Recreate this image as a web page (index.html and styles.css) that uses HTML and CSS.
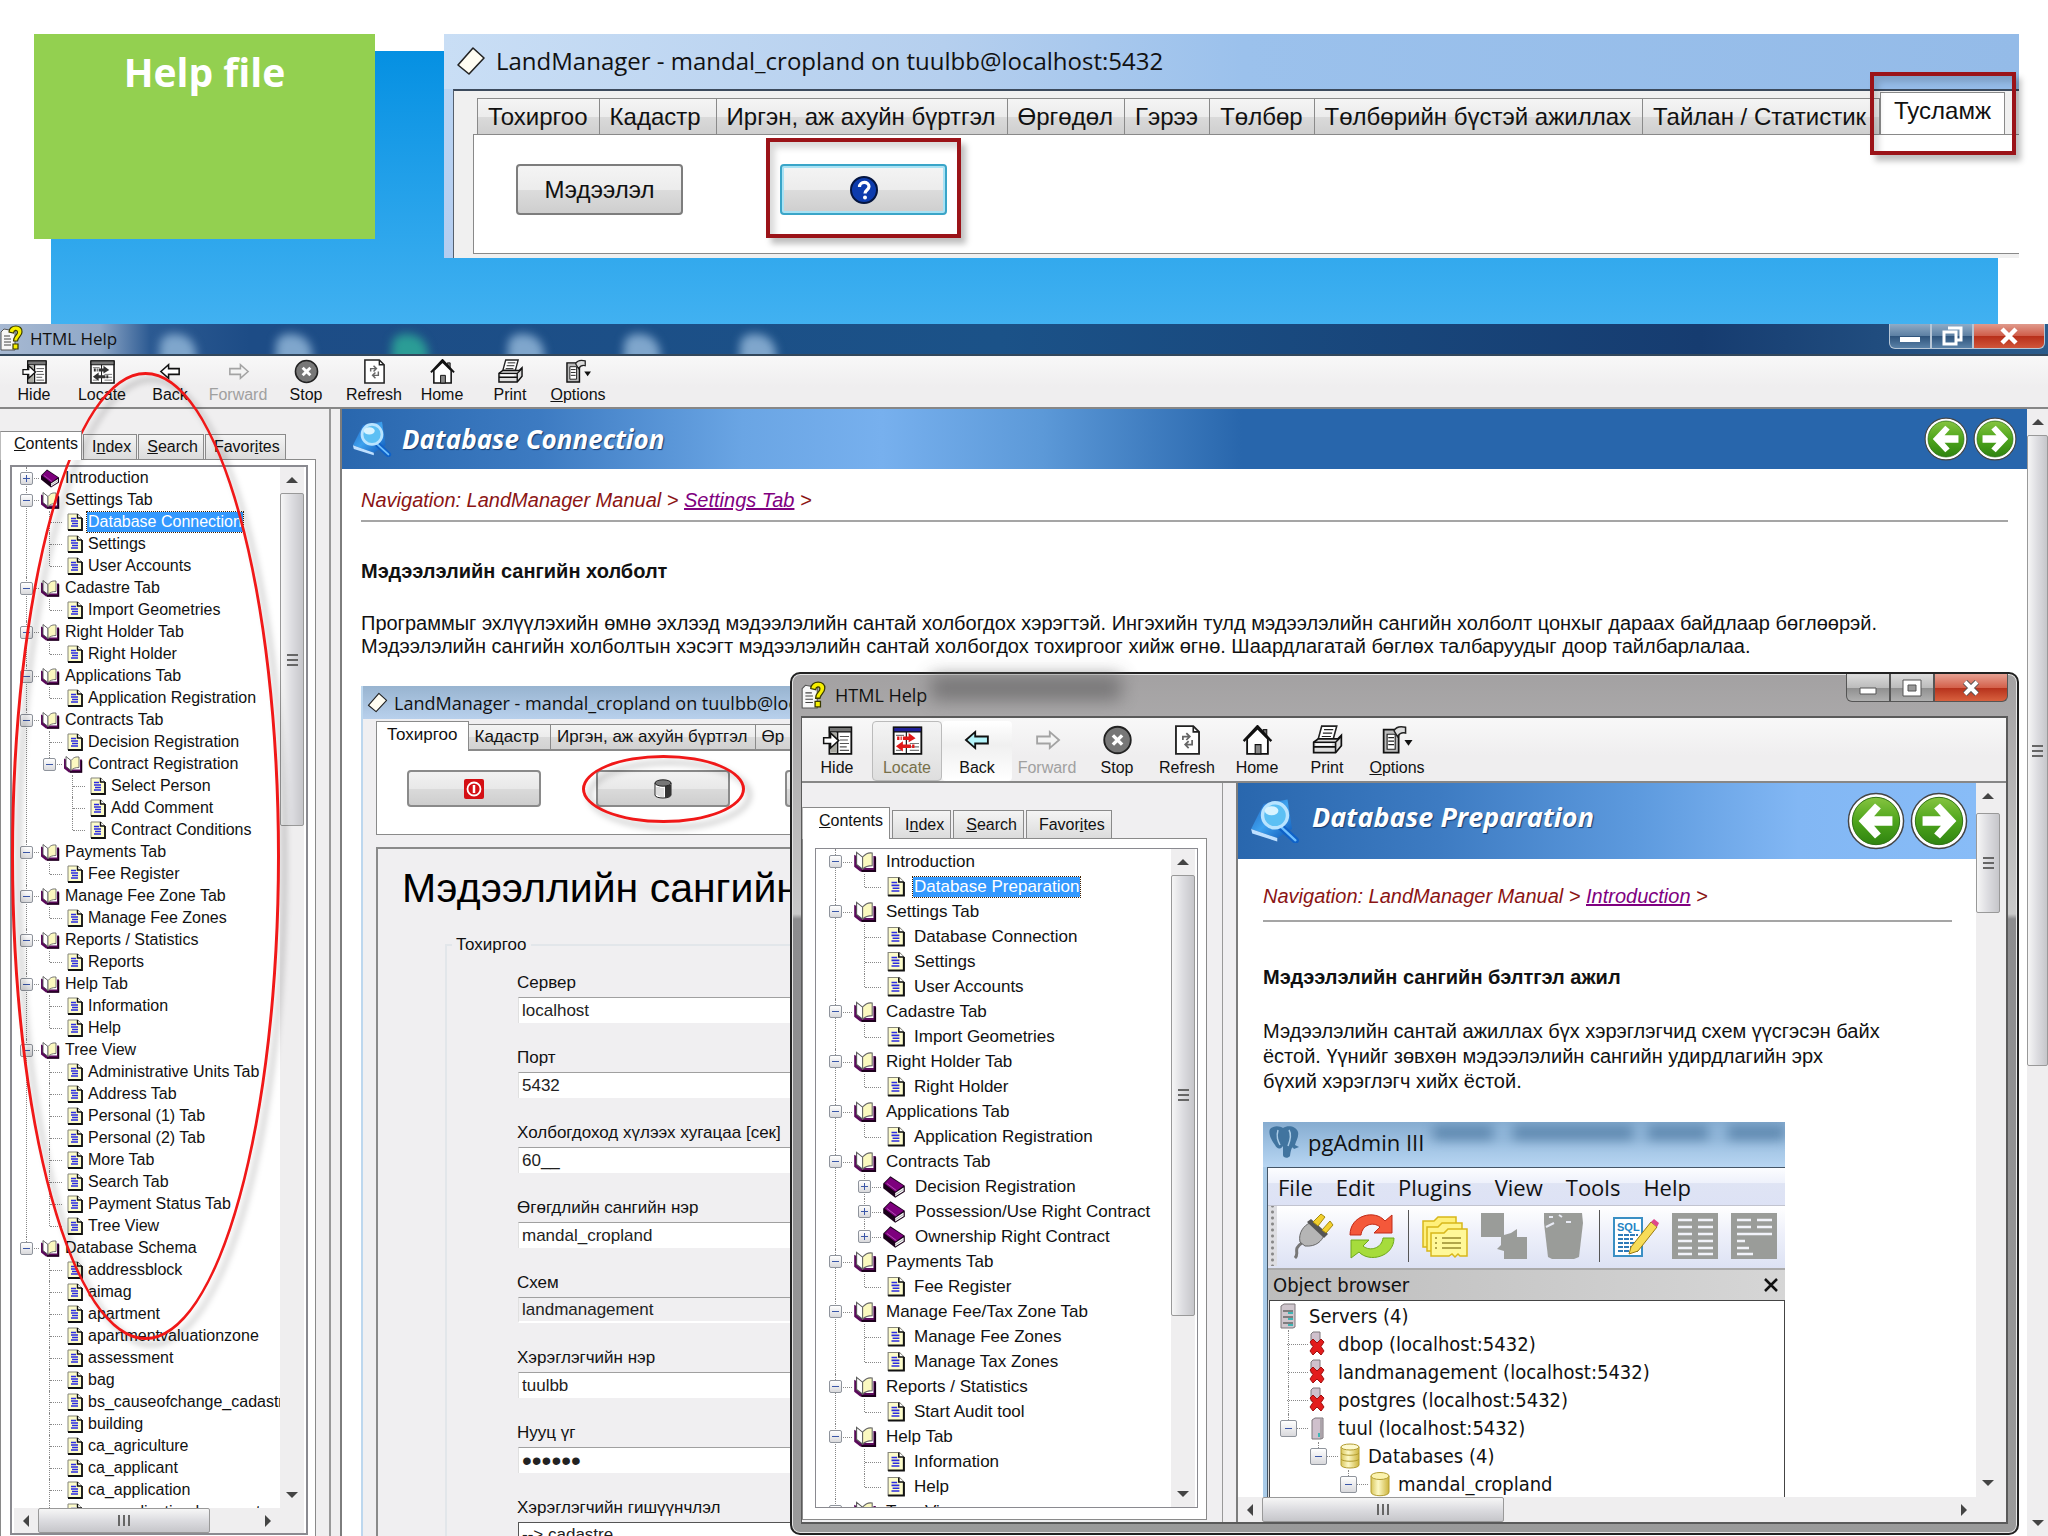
FILE: index.html
```html
<!DOCTYPE html>
<html lang="mn">
<head>
<meta charset="utf-8">
<title>Help file</title>
<link rel="stylesheet" href="styles.css">
</head>
<body>
<svg class="defs" aria-hidden="true">
  <defs>
    <linearGradient id="g-green" x1="0" y1="0" x2="0" y2="1"><stop offset="0" stop-color="#86c440"/><stop offset=".5" stop-color="#4ea51c"/><stop offset="1" stop-color="#2f8410"/></linearGradient>
    <linearGradient id="g-book" x1="0" y1="0" x2="1" y2="1"><stop offset="0" stop-color="#1c5fc0"/><stop offset=".5" stop-color="#3ea2ee"/><stop offset="1" stop-color="#0d56b8"/></linearGradient>
    <linearGradient id="g-cyl" x1="0" y1="0" x2="1" y2="0"><stop offset="0" stop-color="#d9c65a"/><stop offset=".4" stop-color="#fdf9c6"/><stop offset="1" stop-color="#cdb43c"/></linearGradient>
    <symbol id="i-closed" viewBox="0 0 20 18"><path d="M7 0 19 8 19 13 11 18 1 10 1 6Z" fill="#1a001a"/><path d="M7 1 18 8 11 13 2 6Z" fill="#7d007d"/><path d="M11 14 18 9.500 18 12.500 11 17Z" fill="#fff"/><path d="M11 15.500 18 11" stroke="#888" stroke-width=".6"/><path d="M4 6 12 12" stroke="#c060c0" stroke-width=".7"/></symbol>
    <symbol id="i-open" viewBox="0 0 20 18"><path d="M1 3V13L6 17H19V4H17V14H8L3 10V4Z" fill="#5b0a5b"/><path d="M3 1 8 5V15L3 11Z" fill="#fff" stroke="#555" stroke-width=".9"/><path d="M8 5C10 3 11 1 16 1.500V12C12 12 10 13 8 15Z" fill="#fbf9c0" stroke="#666" stroke-width=".9"/><path d="M18.500 5V16.500H7" fill="none" stroke="#1c001c" stroke-width="1.500"/></symbol>
    <symbol id="i-page" viewBox="0 0 16 18"><path d="M1 1H11L15 5V17H1Z" fill="#fdfccb" stroke="#85857a"/><path d="M15 5V17H1" fill="none" stroke="#111" stroke-width="1.800"/><path d="M10.500 1V5H15" fill="#fff" stroke="#111" stroke-width="1.400"/><path d="M4 5.500H9M4 8H11M5 10.500H11M4 13H11" stroke="#2a2ae0" stroke-width="1.400"/></symbol>
    <symbol id="i-hide" viewBox="0 0 26 26"><path d="M6 2H25V25H6Z" fill="#fff" stroke="#111" stroke-width="1.600"/><path d="M6 2H25V6H6Z" fill="#777" stroke="#111"/><path d="M13 6V25" stroke="#111" stroke-width="1.500"/><path d="M7 7H12V24H7Z" fill="#a8a8a0"/><path d="M15 10H23M15 13H22M15 16H23M15 19H21M15 22H23" stroke="#555"/><path d="M1 11H7V7L14 13.500 7 20V16H1Z" fill="#fff" stroke="#111" stroke-width="1.300"/></symbol>
    <symbol id="i-locate" viewBox="0 0 26 26"><path d="M1 2H25V25H1Z" fill="#fff" stroke="#111" stroke-width="1.600"/><path d="M1 2H25V6H1Z" fill="var(--bar,#777)" stroke="#111"/><path d="M12 6V25" stroke="#111"/><path d="M3 9H10M15 16H23M15 19H23M15 22H23M3 22H8" stroke="#777"/><path d="M9 10H14V7L20 11.500 14 15V13H9ZM4 10H6V13H4ZM7 10H8V13H7Z" fill="var(--arr,#333)"/><path d="M16 17H9V14L3 18.500 9 23V20H16ZM17 17H19V20H17Z" fill="var(--arr,#333)"/></symbol>
    <symbol id="i-back" viewBox="0 0 26 26"><path d="M3 13 11 6V10H22V16H11V20Z" fill="var(--fill,#fff)" stroke="#111" stroke-width="1.600"/></symbol>
    <symbol id="i-forward" viewBox="0 0 26 26"><path d="M23 13 15 6V10H4V16H15V20Z" fill="#f4f4f4" stroke="#a3a3a3" stroke-width="1.600"/></symbol>
    <symbol id="i-stop" viewBox="0 0 26 26"><circle cx="13" cy="13" r="11.500" fill="#777" stroke="#222" stroke-width="1.600"/><path d="M9 9 17 17M17 9 9 17" stroke="#fff" stroke-width="3"/></symbol>
    <symbol id="i-refresh" viewBox="0 0 26 26"><path d="M3 1H18L23 6V25H3Z" fill="#fff" stroke="#222" stroke-width="1.600"/><path d="M18 1V6H23" fill="none" stroke="#222" stroke-width="1.400"/><path d="M9 13V10H14M12 7 15 10 12 13M17 13V17H12M14 14 11 17 14 20" fill="none" stroke="#666" stroke-width="1.500"/></symbol>
    <symbol id="i-home" viewBox="0 0 26 26"><path d="M18 4H21V10H18Z" fill="#777" stroke="#222"/><path d="M4 12V25H22V12L13 3Z" fill="#fff" stroke="#111" stroke-width="1.600"/><path d="M1 14 13 1 25 14" fill="none" stroke="#111" stroke-width="2"/><path d="M11 17H16V25H11Z" fill="#888" stroke="#111"/></symbol>
    <symbol id="i-print" viewBox="0 0 26 26"><path d="M8 1H21L18 12H5Z" fill="#fff" stroke="#222" stroke-width="1.400"/><path d="M10 4H18M9 7H17M8 10H16" stroke="#222"/><path d="M1 15 5 12H22L25 9V18L20 24H1Z" fill="#ddd" stroke="#111" stroke-width="1.500"/><path d="M1 15H20L25 10M20 15V24M1 19H20" fill="none" stroke="#111" stroke-width="1.400"/><path d="M3 17H17" stroke="#fff" stroke-width="1.500"/></symbol>
    <symbol id="i-options" viewBox="0 0 26 26"><path d="M1 4H14V24H1Z" fill="#bbb" stroke="#111" stroke-width="1.500"/><path d="M4 8H11V21H4Z" fill="#fff" stroke="#222"/><path d="M5 11H10M5 14H10M5 17H10" stroke="#222"/><path d="M10 5C12 1 16 1 20 2V7C17 6 15 7 13 10Z" fill="#ddd" stroke="#222" stroke-width="1.300"/><path d="M19 13H26L22.500 18Z" fill="#111"/></symbol>
    <symbol id="i-help" viewBox="0 0 24 26"><path d="M1 7 4 4 15 6V25H1Z" fill="#f7f7f7" stroke="#555"/><path d="M4 11H10M4 14H11M4 17H11M4 20H11" stroke="#444"/><path d="M9 7C9-1 23-1 22 7C22 11 18 12 17.500 16H13.500C13 11 18 10 17.500 7C17 4.500 14 5 13.500 8Z" fill="#f7f000" stroke="#3b3b00" stroke-width="1.200"/><path d="M13 19H18V24H13Z" fill="#f7f000" stroke="#3b3b00" stroke-width="1.200"/></symbol>
    <symbol id="i-diamond" viewBox="0 0 30 30"><path d="M2 19 17 2 28 12 13 28Z" fill="#fffdf2" stroke="#222" stroke-width="1.600" stroke-linejoin="round"/></symbol>
    <symbol id="i-lens" viewBox="0 0 44 38"><path d="M12 4 33 0 37 26 24 34 1 26Z" fill="url(#g-book)"/><path d="M1 26 24 34V37L2 30Z" fill="#bfe0ff"/><path d="M27 24 40 36" stroke="#0f62c8" stroke-width="6" stroke-linecap="round"/><path d="M27 24 40 36" stroke="#6fc0ff" stroke-width="2" stroke-linecap="round"/><circle cx="22" cy="14" r="11" fill="#5cc0f4" stroke="#b9e4ff" stroke-width="3"/><ellipse cx="19" cy="10" rx="6" ry="4" fill="#d9f4ff"/></symbol>
    <symbol id="i-prev" viewBox="0 0 60 60"><circle cx="30" cy="30" r="28.500" fill="#fff" stroke="#444" stroke-width="1.500"/><circle cx="30" cy="30" r="24.500" fill="url(#g-green)" stroke="#2c6e12"/><path d="M12 30 29 12 35 17 28 25H47V35H28L35 43 29 48Z" fill="#fff"/></symbol>
    <symbol id="i-next" viewBox="0 0 60 60"><circle cx="30" cy="30" r="28.500" fill="#fff" stroke="#444" stroke-width="1.500"/><circle cx="30" cy="30" r="24.500" fill="url(#g-green)" stroke="#2c6e12"/><path d="M48 30 31 12 25 17 32 25H13V35H32L25 43 31 48Z" fill="#fff"/></symbol>
    <symbol id="i-server" viewBox="0 0 16 26"><path d="M1 3 4 1H15V24L13 25H1Z" fill="#cfc6cd" stroke="#7d767b"/><path d="M3 8H13M3 14H13M3 20H13" stroke="#666" stroke-width="1.400"/><path d="M8 10H13M8 16H13M8 22H13" stroke="#3fb5b5" stroke-width="2"/></symbol>
    <symbol id="i-server1" viewBox="0 0 16 26"><path d="M3 5 6 3H14V23L12 24H3Z" fill="#cfc0cc" stroke="#7d767b"/><path d="M12 4V24" stroke="#888"/><path d="M9 18H11V22H9Z" fill="#3fb5b5"/></symbol>
    <symbol id="i-down" viewBox="0 0 16 26"><path d="M2 3 4 1H11V14H2Z" fill="#cfc0cc" stroke="#7d767b"/><path d="M1 11 4 8 8 12 12 8 15 11 12 15.500 15 20 12 24 8 20 4 24 1 20 4 15.500Z" fill="#e31c1c" stroke="#a01010"/></symbol>
    <symbol id="i-dbs" viewBox="0 0 22 26"><path d="M2 4V22C2 26 20 26 20 22V4Z" fill="url(#g-cyl)" stroke="#b29c30"/><ellipse cx="11" cy="4" rx="9" ry="3" fill="#fdf9cf" stroke="#b29c30"/><path d="M2 10C3 13 19 13 20 10M2 16C3 19 19 19 20 16" fill="none" stroke="#b29c30"/></symbol>
    <symbol id="i-db" viewBox="0 0 22 26"><path d="M2 5V21C2 26 20 26 20 21V5Z" fill="url(#g-cyl)" stroke="#b29c30"/><ellipse cx="11" cy="5" rx="9" ry="3.500" fill="#fbf3ae" stroke="#b29c30"/></symbol>
  </defs>
</svg>

<header class="hero">
  <h1 class="hero-title">Help file</h1>
  <section class="land" aria-label="LandManager">
    <div class="land-bar"><svg class="ic30"><use href="#i-diamond"/></svg><span>LandManager - mandal_cropland on tuulbb@localhost:5432</span></div>
    <div class="land-body">
      <nav class="wtabs">
        <button class="wtab">Тохиргоо</button><button class="wtab wtab-a">Кадастр</button><button class="wtab">Иргэн, аж ахуйн бүртгэл</button><button class="wtab">Өргөдөл</button><button class="wtab">Гэрээ</button><button class="wtab">Төлбөр</button><button class="wtab">Төлбөрийн бүстэй ажиллах</button><button class="wtab wtab-cut">Тайлан / Статистик</button><span class="mark-wrap"><button class="wtab active">Тусламж</button><i class="mark mark-tab"></i></span>
      </nav>
      <div class="land-panel">
        <button class="push">Мэдээлэл</button>
        <span class="mark-wrap"><button class="push focus" aria-label="Тусламж"><svg width="28" height="28" viewBox="0 0 28 28"><circle cx="14" cy="14" r="13" fill="#0d3cae" stroke="#05153f" stroke-width="2"/><path d="M9.500 11C9.500 5 19 5 19 10.500C19 14 15 14 15 17.500" fill="none" stroke="#fff" stroke-width="3.200"/><circle cx="15" cy="21.500" r="2" fill="#fff"/></svg></button><i class="mark mark-btn"></i></span>
      </div>
    </div>
  </section>
</header>

<main class="win">
  <div class="win-bar">
    <svg class="ic24"><use href="#i-help"/></svg><span class="win-name">HTML Help</span>
    <div class="glows"><i class="glow"></i><i class="glow"></i><i class="glow teal"></i><i class="glow"></i><i class="glow"></i><i class="glow"></i></div>
    <div class="wbtns">
      <button class="wb" aria-label="Minimize"><svg width="22" height="16" viewBox="0 0 22 16"><path d="M1 9H21V14H1Z" fill="#fff"/></svg></button>
      <button class="wb" aria-label="Restore"><svg width="22" height="20" viewBox="0 0 22 20"><path d="M7 2H20V14H16M3 6H15V18H3Z" fill="none" stroke="#fff" stroke-width="3"/></svg></button>
      <button class="wb close" aria-label="Close"><svg width="20" height="18" viewBox="0 0 20 18"><path d="M3 2 17 16M17 2 3 16" stroke="#fff" stroke-width="4.500"/></svg></button>
    </div>
  </div>
  <div class="tools">
    <button class="tool"><svg><use href="#i-hide"/></svg>Hide</button>
    <button class="tool"><svg><use href="#i-locate"/></svg>Locate</button>
    <button class="tool"><svg><use href="#i-back"/></svg>Back</button>
    <button class="tool" disabled><svg><use href="#i-forward"/></svg>Forward</button>
    <button class="tool"><svg><use href="#i-stop"/></svg>Stop</button>
    <button class="tool"><svg><use href="#i-refresh"/></svg>Refresh</button>
    <button class="tool"><svg><use href="#i-home"/></svg>Home</button>
    <button class="tool"><svg><use href="#i-print"/></svg>Print</button>
    <button class="tool"><svg><use href="#i-options"/></svg><span><u>O</u>ptions</span></button>
  </div>
  <div class="split">
    <aside class="side">
      <nav class="htabs"><button class="htab active"><u>C</u>ontents</button><button class="htab">I<u>n</u>dex</button><button class="htab"><u>S</u>earch</button><button class="htab">Favor<u>i</u>tes</button></nav>
      <div class="side-panel">
        <div class="treebox">
          <div class="treeview">
            <ul class="tree">
              <li><div class="row"><button class="toggle plus" aria-label="Expand"></button><svg class="book"><use href="#i-closed"/></svg><span>Introduction</span></div></li>
              <li><div class="row"><button class="toggle" aria-label="Collapse"></button><svg class="book"><use href="#i-open"/></svg><span>Settings Tab</span></div>
                <ul>
                  <li><div class="row leaf"><svg class="page"><use href="#i-page"/></svg><span class="sel">Database Connection</span></div></li>
                  <li><div class="row leaf"><svg class="page"><use href="#i-page"/></svg><span>Settings</span></div></li>
                  <li><div class="row leaf"><svg class="page"><use href="#i-page"/></svg><span>User Accounts</span></div></li>
                </ul></li>
              <li><div class="row"><button class="toggle" aria-label="Collapse"></button><svg class="book"><use href="#i-open"/></svg><span>Cadastre Tab</span></div>
                <ul><li><div class="row leaf"><svg class="page"><use href="#i-page"/></svg><span>Import Geometries</span></div></li></ul></li>
              <li><div class="row"><button class="toggle" aria-label="Collapse"></button><svg class="book"><use href="#i-open"/></svg><span>Right Holder Tab</span></div>
                <ul><li><div class="row leaf"><svg class="page"><use href="#i-page"/></svg><span>Right Holder</span></div></li></ul></li>
              <li><div class="row"><button class="toggle" aria-label="Collapse"></button><svg class="book"><use href="#i-open"/></svg><span>Applications Tab</span></div>
                <ul><li><div class="row leaf"><svg class="page"><use href="#i-page"/></svg><span>Application Registration</span></div></li></ul></li>
              <li><div class="row"><button class="toggle" aria-label="Collapse"></button><svg class="book"><use href="#i-open"/></svg><span>Contracts Tab</span></div>
                <ul>
                  <li><div class="row leaf"><svg class="page"><use href="#i-page"/></svg><span>Decision Registration</span></div></li>
                  <li><div class="row"><button class="toggle" aria-label="Collapse"></button><svg class="book"><use href="#i-open"/></svg><span>Contract Registration</span></div>
                    <ul>
                      <li><div class="row leaf"><svg class="page"><use href="#i-page"/></svg><span>Select Person</span></div></li>
                      <li><div class="row leaf"><svg class="page"><use href="#i-page"/></svg><span>Add Comment</span></div></li>
                      <li><div class="row leaf"><svg class="page"><use href="#i-page"/></svg><span>Contract Conditions</span></div></li>
                    </ul></li>
                </ul></li>
              <li><div class="row"><button class="toggle" aria-label="Collapse"></button><svg class="book"><use href="#i-open"/></svg><span>Payments Tab</span></div>
                <ul><li><div class="row leaf"><svg class="page"><use href="#i-page"/></svg><span>Fee Register</span></div></li></ul></li>
              <li><div class="row"><button class="toggle" aria-label="Collapse"></button><svg class="book"><use href="#i-open"/></svg><span>Manage Fee Zone Tab</span></div>
                <ul><li><div class="row leaf"><svg class="page"><use href="#i-page"/></svg><span>Manage Fee Zones</span></div></li></ul></li>
              <li><div class="row"><button class="toggle" aria-label="Collapse"></button><svg class="book"><use href="#i-open"/></svg><span>Reports / Statistics</span></div>
                <ul><li><div class="row leaf"><svg class="page"><use href="#i-page"/></svg><span>Reports</span></div></li></ul></li>
              <li><div class="row"><button class="toggle" aria-label="Collapse"></button><svg class="book"><use href="#i-open"/></svg><span>Help Tab</span></div>
                <ul>
                  <li><div class="row leaf"><svg class="page"><use href="#i-page"/></svg><span>Information</span></div></li>
                  <li><div class="row leaf"><svg class="page"><use href="#i-page"/></svg><span>Help</span></div></li>
                </ul></li>
              <li><div class="row"><button class="toggle" aria-label="Collapse"></button><svg class="book"><use href="#i-open"/></svg><span>Tree View</span></div>
                <ul>
                  <li><div class="row leaf"><svg class="page"><use href="#i-page"/></svg><span>Administrative Units Tab</span></div></li>
                  <li><div class="row leaf"><svg class="page"><use href="#i-page"/></svg><span>Address Tab</span></div></li>
                  <li><div class="row leaf"><svg class="page"><use href="#i-page"/></svg><span>Personal (1) Tab</span></div></li>
                  <li><div class="row leaf"><svg class="page"><use href="#i-page"/></svg><span>Personal (2) Tab</span></div></li>
                  <li><div class="row leaf"><svg class="page"><use href="#i-page"/></svg><span>More Tab</span></div></li>
                  <li><div class="row leaf"><svg class="page"><use href="#i-page"/></svg><span>Search Tab</span></div></li>
                  <li><div class="row leaf"><svg class="page"><use href="#i-page"/></svg><span>Payment Status Tab</span></div></li>
                  <li><div class="row leaf"><svg class="page"><use href="#i-page"/></svg><span>Tree View</span></div></li>
                </ul></li>
              <li><div class="row"><button class="toggle" aria-label="Collapse"></button><svg class="book"><use href="#i-open"/></svg><span>Database Schema</span></div>
                <ul>
                  <li><div class="row leaf"><svg class="page"><use href="#i-page"/></svg><span>addressblock</span></div></li>
                  <li><div class="row leaf"><svg class="page"><use href="#i-page"/></svg><span>aimag</span></div></li>
                  <li><div class="row leaf"><svg class="page"><use href="#i-page"/></svg><span>apartment</span></div></li>
                  <li><div class="row leaf"><svg class="page"><use href="#i-page"/></svg><span>apartmentvaluationzone</span></div></li>
                  <li><div class="row leaf"><svg class="page"><use href="#i-page"/></svg><span>assessment</span></div></li>
                  <li><div class="row leaf"><svg class="page"><use href="#i-page"/></svg><span>bag</span></div></li>
                  <li><div class="row leaf"><svg class="page"><use href="#i-page"/></svg><span>bs_causeofchange_cadastr</span></div></li>
                  <li><div class="row leaf"><svg class="page"><use href="#i-page"/></svg><span>building</span></div></li>
                  <li><div class="row leaf"><svg class="page"><use href="#i-page"/></svg><span>ca_agriculture</span></div></li>
                  <li><div class="row leaf"><svg class="page"><use href="#i-page"/></svg><span>ca_applicant</span></div></li>
                  <li><div class="row leaf"><svg class="page"><use href="#i-page"/></svg><span>ca_application</span></div></li>
                  <li><div class="row leaf"><svg class="page"><use href="#i-page"/></svg><span>ca_applicationdocument</span></div></li>
                </ul></li>
            </ul>
            <div class="vs"><i class="ar up"></i><i class="thumb t-side"></i><i class="ar dn"></i></div>
          </div>
          <div class="hs hs-side"><i class="ar lf"></i><i class="thumb t-h"></i><i class="ar rt"></i></div>
        </div>
      </div>
    </aside>
    <div class="content">
      <article class="doc">
        <header class="doc-head"><svg class="lens"><use href="#i-lens"/></svg><h2>Database Connection</h2><div class="pn"><button aria-label="Previous"><svg><use href="#i-prev"/></svg></button><button aria-label="Next"><svg><use href="#i-next"/></svg></button></div></header>
        <div class="doc-body">
          <p class="crumb">Navigation: LandManager Manual &gt; <a href="#settings">Settings Tab</a> &gt;</p>
          <h3>Мэдээлэлийн сангийн холболт</h3>
          <p class="para">Программыг эхлүүлэхийн өмнө эхлээд мэдээлэлийн сантай холбогдох хэрэгтэй. Ингэхийн тулд мэдээлэлийн сангийн холболт цонхыг дараах байдлаар бөглөөрэй.<br>Мэдээлэлийн сангийн холболтын хэсэгт мэдээлэлийн сантай холбогдох тохиргоог хийж өгнө. Шаардлагатай бөглөх талбаруудыг доор тайлбарлалаа.</p>
          <section class="shot">
            <div class="shot-bar"><svg><use href="#i-diamond"/></svg><span>LandManager - mandal_cropland on tuulbb@loca</span></div>
            <div class="shot-body">
              <nav class="stabs"><button class="stab active">Тохиргоо</button><button class="stab">Кадастр</button><button class="stab">Иргэн, аж ахуйн бүртгэл</button><button class="stab">Өр</button></nav>
              <div class="shot-panel">
                <button class="spush" aria-label="Гарах"><svg width="20" height="20" viewBox="0 0 20 20"><rect width="20" height="20" rx="2" fill="#d40f14"/><circle cx="10" cy="10" r="6.500" fill="none" stroke="#fff" stroke-width="1.800"/><path d="M10 6V14" stroke="#fff" stroke-width="2.500"/></svg></button>
                <span class="mark-wrap"><button class="spush" aria-label="Мэдээллийн сан"><svg width="18" height="20" viewBox="0 0 18 20"><path d="M1 4V16C1 20 17 20 17 16V4Z" fill="#fff" stroke="#222"/><path d="M11 6H17V16C16 18 13 19 11 19Z" fill="#333"/><path d="M3 8V16M5 8V17M7 9V18M9 9V18" stroke="#bbb"/><ellipse cx="9" cy="4" rx="8" ry="3.200" fill="#777" stroke="#222"/></svg></button><i class="ring ring-btn"></i></span>
                <button class="spush" aria-label="Тохируулах"></button>
              </div>
              <form class="shot-form">
                <h4>Мэдээллийн сангийн</h4>
                <fieldset>
                  <legend>Тохиргоо</legend>
                  <div class="field"><label for="f1">Сервер</label><input id="f1" value="localhost"></div>
                  <div class="field"><label for="f2">Порт</label><input id="f2" value="5432"></div>
                  <div class="field"><label for="f3">Холбогдоход хүлээх хугацаа [сек]</label><input id="f3" value="60__"></div>
                  <div class="field"><label for="f4">Өгөгдлийн сангийн нэр</label><input id="f4" value="mandal_cropland"></div>
                  <div class="field"><label for="f5">Схем</label><input id="f5" value="landmanagement" readonly></div>
                  <div class="field"><label for="f6">Хэрэглэгчийн нэр</label><input id="f6" value="tuulbb"></div>
                  <div class="field"><label for="f7">Нууц үг</label><input id="f7" type="password" value="tuul12"></div>
                  <div class="field"><label for="f8">Хэрэглэгчийн гишүүнчлэл</label><input id="f8" class="boxed" value="--&gt; cadastre"></div>
                </fieldset>
              </form>
            </div>
          </section>
        </div>
      </article>
      <div class="vs vs-main"><i class="ar up"></i><i class="thumb t-main"></i><i class="ar dn"></i></div>
    </div>
  </div>
</main>
<i class="ring ring-tree"></i>

<section class="dlg" aria-label="HTML Help">
  <div class="dlg-bar">
    <svg class="ic26"><use href="#i-help"/></svg><span>HTML Help</span><i class="smudge"></i>
    <div class="wbtns grey">
      <button class="wb" aria-label="Minimize"><svg width="20" height="16" viewBox="0 0 20 16"><path d="M2 8H18V14H2Z" fill="#fff" stroke="#555"/></svg></button>
      <button class="wb" aria-label="Maximize"><svg width="20" height="18" viewBox="0 0 20 18"><path d="M1 1H19V17H1Z" fill="#fff" stroke="#555"/><path d="M6 6H14V12H6Z" fill="#999" stroke="#555"/></svg></button>
      <button class="wb close" aria-label="Close"><svg width="18" height="16" viewBox="0 0 18 16"><path d="M3 2 15 14M15 2 3 14" stroke="#555" stroke-width="6"/><path d="M3 2 15 14M15 2 3 14" stroke="#fff" stroke-width="4"/></svg></button>
    </div>
  </div>
  <div class="dlg-in">
    <div class="tools">
      <button class="tool"><svg><use href="#i-hide"/></svg>Hide</button>
      <button class="tool pressed"><svg class="red"><use href="#i-locate"/></svg><span class="faded">Locate</span></button>
      <button class="tool hot"><svg class="cyan"><use href="#i-back"/></svg>Back</button>
      <button class="tool" disabled><svg><use href="#i-forward"/></svg>Forward</button>
      <button class="tool"><svg><use href="#i-stop"/></svg>Stop</button>
      <button class="tool"><svg><use href="#i-refresh"/></svg>Refresh</button>
      <button class="tool"><svg><use href="#i-home"/></svg>Home</button>
      <button class="tool"><svg><use href="#i-print"/></svg>Print</button>
      <button class="tool"><svg><use href="#i-options"/></svg><span><u>O</u>ptions</span></button>
    </div>
    <div class="split">
      <aside class="side">
        <nav class="htabs"><button class="htab active"><u>C</u>ontents</button><button class="htab">I<u>n</u>dex</button><button class="htab"><u>S</u>earch</button><button class="htab">Favor<u>i</u>tes</button></nav>
        <div class="side-panel">
          <div class="treebox">
            <div class="treeview">
              <ul class="tree">
                <li><div class="row"><button class="toggle" aria-label="Collapse"></button><svg class="book"><use href="#i-open"/></svg><span>Introduction</span></div>
                  <ul><li><div class="row leaf"><svg class="page"><use href="#i-page"/></svg><span class="sel">Database Preparation</span></div></li></ul></li>
                <li><div class="row"><button class="toggle" aria-label="Collapse"></button><svg class="book"><use href="#i-open"/></svg><span>Settings Tab</span></div>
                  <ul>
                    <li><div class="row leaf"><svg class="page"><use href="#i-page"/></svg><span>Database Connection</span></div></li>
                    <li><div class="row leaf"><svg class="page"><use href="#i-page"/></svg><span>Settings</span></div></li>
                    <li><div class="row leaf"><svg class="page"><use href="#i-page"/></svg><span>User Accounts</span></div></li>
                  </ul></li>
                <li><div class="row"><button class="toggle" aria-label="Collapse"></button><svg class="book"><use href="#i-open"/></svg><span>Cadastre Tab</span></div>
                  <ul><li><div class="row leaf"><svg class="page"><use href="#i-page"/></svg><span>Import Geometries</span></div></li></ul></li>
                <li><div class="row"><button class="toggle" aria-label="Collapse"></button><svg class="book"><use href="#i-open"/></svg><span>Right Holder Tab</span></div>
                  <ul><li><div class="row leaf"><svg class="page"><use href="#i-page"/></svg><span>Right Holder</span></div></li></ul></li>
                <li><div class="row"><button class="toggle" aria-label="Collapse"></button><svg class="book"><use href="#i-open"/></svg><span>Applications Tab</span></div>
                  <ul><li><div class="row leaf"><svg class="page"><use href="#i-page"/></svg><span>Application Registration</span></div></li></ul></li>
                <li><div class="row"><button class="toggle" aria-label="Collapse"></button><svg class="book"><use href="#i-open"/></svg><span>Contracts Tab</span></div>
                  <ul>
                    <li><div class="row"><button class="toggle plus" aria-label="Expand"></button><svg class="book"><use href="#i-closed"/></svg><span>Decision Registration</span></div></li>
                    <li><div class="row"><button class="toggle plus" aria-label="Expand"></button><svg class="book"><use href="#i-closed"/></svg><span>Possession/Use Right Contract</span></div></li>
                    <li><div class="row"><button class="toggle plus" aria-label="Expand"></button><svg class="book"><use href="#i-closed"/></svg><span>Ownership Right Contract</span></div></li>
                  </ul></li>
                <li><div class="row"><button class="toggle" aria-label="Collapse"></button><svg class="book"><use href="#i-open"/></svg><span>Payments Tab</span></div>
                  <ul><li><div class="row leaf"><svg class="page"><use href="#i-page"/></svg><span>Fee Register</span></div></li></ul></li>
                <li><div class="row"><button class="toggle" aria-label="Collapse"></button><svg class="book"><use href="#i-open"/></svg><span>Manage Fee/Tax Zone Tab</span></div>
                  <ul>
                    <li><div class="row leaf"><svg class="page"><use href="#i-page"/></svg><span>Manage Fee Zones</span></div></li>
                    <li><div class="row leaf"><svg class="page"><use href="#i-page"/></svg><span>Manage Tax Zones</span></div></li>
                  </ul></li>
                <li><div class="row"><button class="toggle" aria-label="Collapse"></button><svg class="book"><use href="#i-open"/></svg><span>Reports / Statistics</span></div>
                  <ul><li><div class="row leaf"><svg class="page"><use href="#i-page"/></svg><span>Start Audit tool</span></div></li></ul></li>
                <li><div class="row"><button class="toggle" aria-label="Collapse"></button><svg class="book"><use href="#i-open"/></svg><span>Help Tab</span></div>
                  <ul>
                    <li><div class="row leaf"><svg class="page"><use href="#i-page"/></svg><span>Information</span></div></li>
                    <li><div class="row leaf"><svg class="page"><use href="#i-page"/></svg><span>Help</span></div></li>
                  </ul></li>
                <li><div class="row"><button class="toggle" aria-label="Collapse"></button><svg class="book"><use href="#i-open"/></svg><span>Tree View</span></div></li>
              </ul>
              <div class="vs"><i class="ar up"></i><i class="thumb t-dside"></i><i class="ar dn"></i></div>
            </div>
          </div>
        </div>
      </aside>
      <div class="content">
        <div class="dcol">
          <article class="doc">
            <header class="doc-head"><svg class="lens"><use href="#i-lens"/></svg><h2>Database Preparation</h2><div class="pn"><button aria-label="Previous"><svg><use href="#i-prev"/></svg></button><button aria-label="Next"><svg><use href="#i-next"/></svg></button></div></header>
            <div class="doc-body">
              <p class="crumb">Navigation: LandManager Manual &gt; <a href="#intro">Introduction</a> &gt;</p>
              <h3>Мэдээлэлийн сангийн бэлтгэл ажил</h3>
              <p class="para">Мэдээлэлийн сантай ажиллах бүх хэрэглэгчид схем үүсгэсэн байх<br>ёстой. Үүнийг зөвхөн мэдээлэлийн сангийн удирдлагийн эрх<br>бүхий хэрэглэгч хийх ёстой.</p>
              <section class="pg">
                <div class="pg-bar"><svg width="32" height="34" viewBox="0 0 32 34"><path d="M2 4C6 0 12 1 15 3C20 0 28 1 30 7C31 12 28 16 27 20L31 22L26 24C24 20 23 24 22 31C20 34 15 33 15 30V21C12 25 9 24 7 20C3 15 0 8 2 4Z" fill="#41749f"/><path d="M10 5C8 12 10 16 12 20M21 5C24 10 22 16 20 21" fill="none" stroke="#a9cbe6" stroke-width="1.500"/></svg><span>pgAdmin III</span><i class="pg-blur"></i></div>
                <div class="pg-in">
                  <nav class="pg-menu"><a href="#file">File</a><a href="#edit">Edit</a><a href="#plugins">Plugins</a><a href="#view">View</a><a href="#tools">Tools</a><a href="#help">Help</a></nav>
                  <div class="pg-tools">
                    <i class="grip"></i>
                    <svg class="pt" viewBox="0 0 46 46"><path d="M5 45C10 40 2 36 12 30" fill="none" stroke="#777" stroke-width="3"/><path d="M10 29C8 20 14 12 20 10L34 22C32 28 26 34 15 33Z" fill="#b5b5b5" stroke="#666"/><path d="M17 9 21 6 38 21 34 25Z" fill="#555"/><path d="M23 9 31 1 35 4 28 13ZM32 17 40 8 43 12 36 20Z" fill="#f2cf2e" stroke="#a38a10"/></svg>
                    <svg class="pt" viewBox="0 0 46 46"><path d="M1 22C1 2 26-4 36 8L43 2V20H25L31 14C24 8 13 12 12 22Z" fill="#f4583a" stroke="#c02a18"/><path d="M45 25C45 44 20 50 10 39L2 45V27H20L14 33C21 39 33 35 34 25Z" fill="#a6dc3c" stroke="#6ea81c"/></svg>
                    <i class="sep"></i>
                    <svg class="pt" viewBox="0 0 46 46"><path d="M1 8H12L16 4H34V34H1Z" fill="#fff07a" stroke="#d8b71a" stroke-width="1.500"/><path d="M5 14H16L20 10H40V38H5Z" fill="#fff48a" stroke="#d8b71a" stroke-width="1.500"/><path d="M9 20H22L26 16H45V43H38L36 41L33 44L30 41L27 43H9Z" fill="#fff899" stroke="#d8b71a" stroke-width="1.500"/><path d="M20 25H39M20 30H39M20 35H39M13 25H15M13 30H15M13 35H15" stroke="#998a30" stroke-width="1.500"/></svg>
                    <svg class="pt" viewBox="0 0 46 46"><path d="M0 0H23V22L30 20 36 16V24H46V46H23V38L16 36 20 32V24H0Z" fill="#9a9c99"/></svg>
                    <svg class="pt" viewBox="0 0 46 46"><path d="M4 0H42L43 10 39 44 34 46H12L8 44 4 10Z" fill="#9a9c99"/><path d="M6 14 14 10M9 4H13M19 2 22 4M26 9H31" stroke="#e8eaf4" stroke-width="2"/></svg>
                    <i class="sep"></i>
                    <svg class="pt" viewBox="0 0 46 46"><path d="M1 5H29V43H1Z" fill="#fff" stroke="#3a8fc4" stroke-width="2"/><text x="4" y="18" class="sqlt">SQL</text><path d="M5 22H25M5 26H20M5 30H24M5 34H18M5 38H25" stroke="#2e7ab8" stroke-width="2" stroke-dasharray="5 1"/><path d="M18 34 38 9 44 14 25 38 16 41Z" fill="#f7dc58" stroke="#9a7a10"/><path d="M38 9 41 6 46 10 44 14Z" fill="#e0478a"/></svg>
                    <svg class="pt" viewBox="0 0 46 46"><path d="M0 0H46V46H0Z" fill="#9a9c99"/><path d="M6 7H20M26 7H41M6 14H20M26 14H41M6 21H20M26 21H41M6 28H20M26 28H41M6 35H20M26 35H41M6 41H20M26 41H41" stroke="#f2f3fa" stroke-width="2.500"/></svg>
                    <svg class="pt" viewBox="0 0 46 46"><path d="M0 0H46V46H0Z" fill="#9a9c99"/><path d="M6 7H20M26 7H41M6 14H20M26 14H41M6 21H41M6 28H14M6 35H18M6 41H22" stroke="#f2f3fa" stroke-width="2.500"/></svg>
                  </div>
                  <div class="pg-title"><span>Object browser</span><button aria-label="Close"><svg width="16" height="16" viewBox="0 0 16 16"><path d="M2 2 14 14M14 2 2 14" stroke="#111" stroke-width="2.500"/></svg></button></div>
                  <div class="pg-tree">
                    <div class="row"><svg class="srv"><use href="#i-server"/></svg><span>Servers (4)</span></div>
                    <ul class="tree">
                      <li><div class="row leaf"><svg class="srv"><use href="#i-down"/></svg><span>dbop (localhost:5432)</span></div></li>
                      <li><div class="row leaf"><svg class="srv"><use href="#i-down"/></svg><span>landmanagement (localhost:5432)</span></div></li>
                      <li><div class="row leaf"><svg class="srv"><use href="#i-down"/></svg><span>postgres (localhost:5432)</span></div></li>
                      <li><div class="row"><button class="toggle" aria-label="Collapse"></button><svg class="srv"><use href="#i-server1"/></svg><span>tuul (localhost:5432)</span></div>
                        <ul><li><div class="row"><button class="toggle" aria-label="Collapse"></button><svg class="dbi"><use href="#i-dbs"/></svg><span>Databases (4)</span></div>
                          <ul><li><div class="row"><button class="toggle" aria-label="Collapse"></button><svg class="dbi"><use href="#i-db"/></svg><span>mandal_cropland</span></div></li></ul></li></ul></li>
                    </ul>
                  </div>
                </div>
              </section>
            </div>
          </article>
          <div class="hs"><i class="ar lf"></i><i class="thumb t-dh"></i><i class="ar rt"></i></div>
        </div>
        <div class="vs"><i class="ar up"></i><i class="thumb t-doc"></i><i class="ar dn"></i></div>
      </div>
    </div>
  </div>
</section>
</body>
</html>
```
FILE: styles.css
```css
* { box-sizing: border-box; }
html, body { margin: 0; }
body {
  position: relative; height: 100vh; overflow: hidden;
  display: flex; flex-direction: column;
  background: #fff; color: #111;
  font-family: "Liberation Sans", Arial, sans-serif; font-size: 16px;
}
button { font: inherit; color: inherit; margin: 0; padding: 0; border: 0; background: none; }
h1, h2, h3, h4, p, ul, fieldset { margin: 0; padding: 0; }
ul { list-style: none; }
i { font-style: normal; }
svg { display: block; flex: none; }
.defs { position: absolute; width: 0; height: 0; }

/* slide header */
.hero { position: relative; display: flex; gap: 69px; padding: 34px 29px 66px 34px; flex: none; }
.hero::before { content: ""; position: absolute; inset: 51px 50px 0 51px; background: linear-gradient(#0590e2, #41b1f1); }
.hero-title {
  position: relative; width: 341px; height: 205px; padding-top: 11px; text-align: center;
  background: #93d050; color: #fff; font: bold 39px/54px "Open Sans", sans-serif;
}
.land { position: relative; flex: 1; min-width: 0; height: 224px; display: flex; flex-direction: column; background: linear-gradient(#bcd6f3, #b4cdf0); }
.land-bar {
  display: flex; align-items: center; gap: 10px; height: 55px; padding: 0 0 2px 12px;
  background: linear-gradient(90deg, #c9def5 0, #b5cfee 500px, #9bc1ec 800px, #94bbe8);
  font: 24px "Open Sans", sans-serif;
}
.ic30 { width: 30px; height: 30px; }
.ic24 { width: 24px; height: 26px; }
.ic26 { width: 26px; height: 28px; }
.land-body { flex: 1; margin-left: 9px; padding: 5px 0 0 19px; background: #f0f0f0; border-top: 2px solid #3c4a5c; border-left: 1px solid #55606e; display: flex; flex-direction: column; }
.wtabs { display: flex; align-items: flex-end; padding-left: 4px; padding-right: 14px; height: 38px; font-size: 24px; }
.wtab { flex: none; height: 36px; padding: 0 11px 0 10px; white-space: nowrap; background: linear-gradient(#f4f4f4, #ececec 50%, #dadada 52%, #cfcfcf); border: 1px solid #8a8a8a; border-bottom: 0; }
.wtab + .wtab { border-left: 0; }
.wtab-a { padding-right: 15px; }
.wtab-cut { flex: 1; min-width: 0; overflow: hidden; text-align: left; padding-right: 0; }
.wtab.active { height: 42px; padding: 0 13px 6px; background: #fff; }
.mark-wrap { position: relative; display: block; flex: none; }
.wtabs .mark-wrap { z-index: 1; }
.mark { position: absolute; border: 4px solid #9b1318; box-shadow: 5px 6px 6px rgba(0,0,0,.25), inset 5px 6px 6px rgba(0,0,0,.15); pointer-events: none; }
.mark-tab { inset: -20px -11px -21px -10px; }
.mark-btn { inset: -26px -14px -23px -14px; }
.land-panel { flex: 1; display: flex; align-items: flex-start; gap: 97px; padding: 29px 0 0 42px; margin-bottom: 4px; background: #fff; border: 1px solid #898989; border-right: 0; }
.push { display: flex; align-items: center; justify-content: center; width: 167px; height: 51px; font-size: 24px; border: 2px solid #7d7d7d; border-radius: 4px; background: linear-gradient(#f4f4f4, #ececec 50%, #dcdcdc 52%, #cecece); }
.push.focus { border-color: #3aa5c8; box-shadow: inset 0 0 0 2px #a9e2f4; }

/* help window */
.win { flex: 1; min-height: 0; display: flex; flex-direction: column; background: #f0eff0; }
.win-bar {
  position: relative; display: flex; align-items: center; gap: 6px; height: 32px; flex: none; overflow: hidden; padding-bottom: 2px;
  background: linear-gradient(90deg, #a7b9d2 0, #8fa8c8 100px, #2c5a92 150px, #1d4c86 250px, #1b5288 1000px, #163c70 1700px, #2a5c8c);
  border-bottom: 2px solid #33485c; font: 17px "Open Sans", sans-serif;
}
.win-name { position: relative; }
.glows { position: absolute; inset: 10px auto 0 160px; display: flex; gap: 80px; filter: blur(5px); }
.glow { width: 36px; height: 30px; border-radius: 12px 20px 0 0; background: #7fa6cc; }
.glow.teal { background: #2b9d96; }
.wbtns { display: flex; margin-left: auto; align-self: flex-start; margin-right: 3px; position: relative; }
.wb { display: flex; align-items: center; justify-content: center; width: 42px; height: 25px; background: linear-gradient(#8fabc6, #5c7fa2 50%, #2f547c 52%, #5a82a8); border: 1px solid #b6c6d6; border-top: 0; }
.wb:first-child { border-radius: 0 0 0 6px; }
.wb.close { width: 72px; border-radius: 0 0 6px 0; background: linear-gradient(#e09a8c, #cf5c48 50%, #b8301a 52%, #d0553a); }
.tools { display: flex; flex: none; height: 53px; padding-top: 2px; border-bottom: 2px solid #878787; background: linear-gradient(#f8f8f8, #efeeef 60%); }
.tool { display: flex; flex-direction: column; align-items: center; gap: 1px; width: 68px; padding-top: 1px; line-height: 20px; white-space: nowrap; }
.tool svg { width: 25px; height: 25px; }
.tool:disabled { color: #a0a0a0; }
.split { flex: 1; min-height: 0; display: flex; }
.side { flex: none; width: 342px; padding-top: 22px; display: flex; flex-direction: column; min-height: 0; border-right: 2px solid #7d7d7d; background: linear-gradient(90deg, transparent 329px, #999 329px, #999 331px, transparent 331px); }
.htabs { display: flex; align-items: flex-end; height: 28px; flex: none; }
.htab { height: 25px; padding: 0 5px 0 8px; margin-left: 1px; white-space: nowrap; border: 1px solid #8a8a8a; border-bottom: 0; background: linear-gradient(#f4f4f4, #dcdcdc); }
.htab.active { height: 29px; padding: 0 3px 5px 13px; margin: 0 0 -1px; background: #fff; z-index: 1; border-left-color: #bbb; }
.side-panel { flex: 1; min-height: 0; margin-right: 24px; padding: 5px 7px 1px 9px; background: #fff; border: 1px solid #8a8a8a; border-bottom: 0; display: flex; flex-direction: column; }
.treebox { flex: 1; min-height: 0; display: flex; flex-direction: column; border: 2px solid #8a8a90; padding: 0 2px; background: #fff; }
.treeview { flex: 1; min-height: 0; display: flex; overflow: hidden; }

/* tree */
.win { --row: 22px; --box: 13px; --dash: 7px; --book: 20px; --page: 16px; --ind: 23px; }
.dlg { --row: 25px; --box: 13px; --dash: 11px; --book: 24px; --page: 18px; --ind: 29px; }
.pg { --row: 28px; --box: 17px; --dash: 12px; --ind: 30px; }
.tree { flex: 1; min-width: 0; overflow: hidden; }
.tree ul { margin-left: var(--ind); }
.tree li { position: relative; }
.tree li::before { content: ""; position: absolute; left: 6px; top: 0; bottom: 0; border-left: 1px dotted #888; }
.tree li:last-child::before { bottom: auto; height: calc(var(--row) / 2); }
.row { position: relative; display: flex; align-items: center; height: var(--row); white-space: nowrap; }
.tree .row::before { content: ""; position: absolute; left: 7px; top: 50%; width: calc(var(--box) + var(--dash) - 8px); border-top: 1px dotted #888; }
.row.leaf { padding-left: calc(var(--box) + var(--dash) + 4px); }
.toggle {
  position: relative; flex: none; width: var(--box); height: var(--box); margin-right: var(--dash);
  border: 1px solid #8f949c; border-radius: 2px;
  background: linear-gradient(#3b57a8, #3b57a8) center / 7px 1px no-repeat, linear-gradient(#fff, #d9d9dc);
}
.toggle.plus { background: linear-gradient(#3b57a8, #3b57a8) center / 7px 1px no-repeat, linear-gradient(#3b57a8, #3b57a8) center / 1px 7px no-repeat, linear-gradient(#fff, #d9d9dc); }
.book { width: var(--book); height: 19px; margin-right: 4px; }
.page { width: var(--page); height: 18px; margin-right: 4px; }
.row span { padding: 0 1px; }
.row .sel { background: #3399ff; color: #fff; outline: 1px dotted #402000; line-height: 20px; }
.win .treeview > .tree { margin: 0 0 0 6px; }

/* scroll bars */
.vs { flex: none; width: 24px; display: flex; flex-direction: column; justify-content: flex-start; background: #efeeef; }
.hs { flex: none; height: 25px; display: flex; align-items: stretch; background: #efeeef; }
.ar { flex: none; width: 24px; height: 26px; display: flex; align-items: center; justify-content: center; }
.ar::before { content: ""; border: 6px solid transparent; }
.up::before { border-bottom-color: #444; border-top: 0; }
.dn { margin-top: auto; }
.dn::before { border-top-color: #444; border-bottom: 0; }
.lf::before { border-right-color: #444; border-left: 0; }
.rt { margin-left: auto; }
.rt::before { border-left-color: #444; border-right: 0; }
.thumb { display: flex; align-items: center; justify-content: center; border: 1px solid #999; border-radius: 2px; background: linear-gradient(90deg, #f6f6f6, #dcdce0 50%, #c6c6ca); }
.vs .thumb::before { content: ""; width: 11px; height: 12px; background: repeating-linear-gradient(#666 0 2px, transparent 2px 5px); }
.hs .thumb { background: linear-gradient(#f6f6f6, #dcdce0 50%, #c6c6ca); }
.hs .thumb::before { content: ""; width: 12px; height: 11px; background: repeating-linear-gradient(90deg, #666 0 2px, transparent 2px 5px); }
.t-side { height: 32%; }
.hs-side { padding-right: 24px; }
.t-h { width: 172px; }
.t-main { height: 56%; }
.vs-main { width: 21px; }
.vs-main .ar { width: 21px; }

/* document */
.content { flex: 1; min-width: 0; min-height: 0; display: flex; background: #fff; }
.doc { flex: 1; min-width: 0; min-height: 0; overflow: hidden; display: flex; flex-direction: column; }
.doc-head { flex: none; display: flex; align-items: center; height: 60px; padding: 0 10px; background: linear-gradient(90deg, #2967ae 0, #3d7bc2 200px, #6aa5e4 400px, #77b0ee 540px, #5c99d8 700px, #2866ac 900px); color: #fff; }
.lens { width: 40px; height: 36px; }
.doc-head h2 { margin-left: 10px; font: italic bold 26px/30px "Open Sans", sans-serif; text-shadow: 1px 1px 1px #123a70; }
.pn { display: flex; gap: 5px; margin-left: auto; }
.pn svg { width: 44px; height: 44px; }
.doc-body { flex: 1; min-height: 0; display: flex; flex-direction: column; padding: 19px 19px 0; }
.crumb { font: italic 20px/24px "Liberation Sans", sans-serif; color: #8b1414; padding-bottom: 8px; border-bottom: 2px solid #a5a5a5; }
.crumb a { color: #800080; }
.doc h3 { margin-top: 37px; font-size: 20px; line-height: 24px; }
.para { margin-top: 29px; font-size: 20px; line-height: 23px; white-space: nowrap; }

/* embedded application picture */
.shot { flex: 1; min-height: 0; width: 440px; margin-top: 28px; display: flex; flex-direction: column; background: #f0eff1; border-left: 2px solid #bdd7ee; overflow: hidden; }
.shot-bar { display: flex; align-items: center; gap: 6px; flex: none; height: 33px; padding-left: 4px; background: linear-gradient(#98b4d0, #b8d0ec); font: 18px "Open Sans", sans-serif; white-space: nowrap; }
.shot-bar svg { width: 21px; height: 21px; }
.shot-body { flex: 1; min-height: 0; display: flex; flex-direction: column; padding: 2px 0 0 13px; }
.stabs { display: flex; align-items: flex-end; flex: none; height: 29px; font-size: 17px; }
.stab { flex: none; height: 26px; padding: 0 7px 0 6px; white-space: nowrap; border: 1px solid #8a8a8a; border-left: 0; background: linear-gradient(#f4f4f4, #ececec 50%, #dadada 52%, #d2d2d2); }
.stab:nth-child(2) { padding-right: 11px; }
.stab.active { height: 30px; margin-bottom: -1px; padding: 0 10px 3px; border-left: 1px solid #8a8a8a; border-bottom: 0; background: #fff; z-index: 1; }
.shot-panel { flex: none; display: flex; align-items: flex-start; gap: 55px; height: 85px; padding: 19px 0 0 30px; background: #fff; border: 1px solid #8a8a8a; }
.spush { flex: none; display: flex; align-items: center; justify-content: center; width: 134px; height: 37px; border: 2px solid #8a8a8a; border-radius: 4px; background: linear-gradient(#f2f2f2, #e8e8e8 50%, #dadada 52%, #cecece); }
.shot-form { flex: 1; min-height: 0; overflow: hidden; margin-top: 12px; padding: 12px 0 0 24px; border: 2px solid #8a8a8a; border-right: 0; border-bottom: 0; font-size: 17px; }
.shot-form h4 { font-weight: normal; font-size: 41px; line-height: 54px; color: #000; white-space: nowrap; }
.shot-form fieldset { margin: 20px 0 0 43px; padding: 18px 0 0 70px; border: 2px solid #e2e6ea; border-bottom: 0; }
.shot-form legend { margin-left: -65px; padding: 0 4px; line-height: 20px; }
.field { display: flex; flex-direction: column; gap: 4px; margin-bottom: 25px; }
.field label { line-height: 20px; white-space: nowrap; }
.field input { height: 26px; margin-left: 1px; padding: 0 3px; border: 0; border-top: 1px solid #a0a0a0; border-left: 1px solid #e0e0e0; background: #fff; font: 17px "Liberation Sans", sans-serif; color: #222; border-radius: 0; }
.field input[type="password"] { font-size: 28px; }
.field input:read-only { background: #f0eff1; border-bottom: 2px solid #fff; }
.field input.boxed { border: 1px solid #555; }

/* hand-drawn marks */
.ring { position: absolute; border: 3px solid #f01818; border-radius: 50%; filter: drop-shadow(6px 6px 3px rgba(0,0,0,.3)); pointer-events: none; }
.ring-tree { left: 11px; top: 372px; width: 269px; height: 968px; }
.ring-btn { inset: -15px -15px -16px -14px; }

/* second window */
.dlg {
  position: absolute; left: 790px; right: 29px; top: 672px; bottom: 1px;
  display: flex; flex-direction: column; padding: 0 9px 9px;
  border: 2px solid #222; border-radius: 10px;
  background: linear-gradient(#a3a1a2, #c9c9c9 240px, #8c8c8e 245px, #9a9a9a);
  box-shadow: inset 0 0 0 1px #e4e4e4;
}
.dlg-bar { position: relative; display: flex; align-items: center; gap: 8px; flex: none; height: 42px; font: 18px "Open Sans", sans-serif; }
.smudge { position: absolute; left: 130px; top: 2px; width: 190px; height: 24px; background: #6b6a6b; filter: blur(9px); opacity: .8; }
.dlg .wbtns { margin-right: 0; }
.grey .wb { width: 44px; height: 28px; background: linear-gradient(#dcdcdc, #bcbcbc 50%, #8f8f8f 52%, #b0b0b0); border-color: #555; }
.grey .wb.close { width: 74px; background: linear-gradient(#e6a092, #d4624c 50%, #b6321c 52%, #d8603e); }
.dlg-in { flex: 1; min-height: 0; display: flex; flex-direction: column; border: 2px solid #5a5a5a; border-left-width: 1px; background: #f0eff1; }
.dlg .tools { height: 65px; padding: 3px 0 0; }
.dlg .tool { width: 70px; height: 60px; gap: 1px; padding-top: 3px; border: 1px solid transparent; border-radius: 4px; line-height: 24px; }
.dlg .tool svg { width: 31px; height: 30px; }
.dlg .tool.pressed { border-color: #bbb; background: linear-gradient(#f4f4f4, #dedede); }
.dlg .tool.hot { background: linear-gradient(#fff, #f0f0f0 40%, #fff); }
.red { --bar: #20209a; --arr: #e01818; }
.cyan { --fill: #b5f4fa; }
.faded { color: #77704a; }
.dlg .side { width: 436px; background: linear-gradient(90deg, transparent 420px, #999 420px, #999 421px, transparent 421px); padding-top: 24px; font-size: 17px; }
.dlg .htabs { height: 31px; font-size: 16px; }
.dlg .htab { height: 28px; padding: 0 6px 0 12px; margin-left: 2px; }
.dlg .htab.active { height: 32px; padding: 0 6px 5px 16px; margin-left: 0; }
.dlg .side-panel { margin-right: 29px; padding: 9px 8px 11px 12px; border-bottom: 1px solid #8a8a8a; margin-bottom: 2px; }
.dlg .treebox { border-width: 1px; }
.dlg .treeview > .tree { margin: 0 0 0 11px; }
.dlg .row.leaf { padding-left: 29px; }
.dlg .page { margin-right: 8px; height: 21px; }
.dlg .book { margin-right: 8px; height: 22px; }
.t-dside { height: 67%; }
.dlg .doc-head { height: 76px; padding: 0 8px 0 12px; background: linear-gradient(90deg, #2967ae 0, #3d7bc2 200px, #5d9ade 400px, #82b7f4 560px, #88bcf7); }
.dlg .lens { width: 50px; height: 44px; }
.dlg .doc-head h2 { font-size: 27px; margin: 0 0 8px 12px; }
.dlg .pn svg { width: 58px; height: 58px; }
.dcol { flex: 1; min-width: 0; min-height: 0; display: flex; flex-direction: column; }
.dlg .doc-body { padding: 25px 24px 0 25px; }
.dlg .crumb { padding-bottom: 12px; }
.dlg .doc h3 { margin-top: 43px; }
.dlg .para { margin-top: 30px; line-height: 25px; }
.t-dh { width: 242px; }
.t-doc { height: 14%; margin-top: 4px; }
.dlg .content > .vs { width: 30px; padding-bottom: 26px; }
.dlg .content > .vs .ar, .dlg .content > .vs .thumb { width: 24px; }

/* pgAdmin */
.pg { flex: 1; min-height: 0; overflow: hidden; width: 522px; margin-top: 28px; display: flex; flex-direction: column; background: #a9cbe8; }
.pg-bar { position: relative; flex: none; display: flex; align-items: center; gap: 8px; height: 45px; padding: 0 0 6px 5px; background: linear-gradient(#86acd0, #a4c6e6 60%, #b8d6f2); font: 22px "Open Sans", sans-serif; overflow: hidden; }
.pg-blur { position: absolute; left: 170px; right: 0; top: 4px; height: 14px; background: repeating-linear-gradient(90deg, #4f7ba3 0 60px, #8db4d8 60px 80px, #4f7ba3 80px 200px, #8db4d8 200px 215px); filter: blur(6px); opacity: .8; }
.pg-in { flex: 1; min-height: 0; margin-left: 4px; display: flex; flex-direction: column; background: #ddd; border: 1px solid #456; border-right: 0; border-bottom: 0; }
.pg-menu { flex: none; display: flex; gap: 23px; height: 38px; padding-left: 10px; align-items: center; background: linear-gradient(#fcfdff, #eef1fb 40%, #dfe4f4 42%, #dde2f5); border-bottom: 1px solid #c2c4d0; font: 22px "Open Sans", sans-serif; }
.pg-menu a { color: #111; text-decoration: none; }
.pg-tools { flex: none; display: flex; align-items: center; gap: 13px; height: 64px; padding-bottom: 2px; overflow: hidden; background: linear-gradient(#fff, #eef0fa 45%, #dde2f4); border-bottom: 2px solid #aaa; }
.pt { width: 46px; height: 46px; }
.grip { flex: none; width: 9px; height: 60px; background: radial-gradient(circle, #888 1px, transparent 2px) center / 9px 6px, #dedee2; }
.sep { flex: none; width: 1px; height: 52px; background: #555; }
.sqlt { font: bold 11px "Liberation Sans", sans-serif; fill: #2483c4; }
.pg-title { flex: none; display: flex; align-items: center; justify-content: space-between; height: 30px; padding: 0 6px 0 5px; background: linear-gradient(90deg, #bdbdbd, #d6d6d6); font: 20px "DejaVu Sans Condensed", "Open Sans", sans-serif; }
.pg-tree { flex: 1; min-height: 0; overflow: hidden; margin: 0 0 0 1px; padding: 1px 0 0 10px; background: #fff; border: 1px solid #444; border-bottom: 0; font: 20px "DejaVu Sans Condensed", "Open Sans", sans-serif; }
.srv { width: 16px; height: 26px; margin-right: 12px; }
.dbi { width: 22px; height: 26px; margin-right: 6px; }
.pg .tree li::before { left: 8px; }
```
